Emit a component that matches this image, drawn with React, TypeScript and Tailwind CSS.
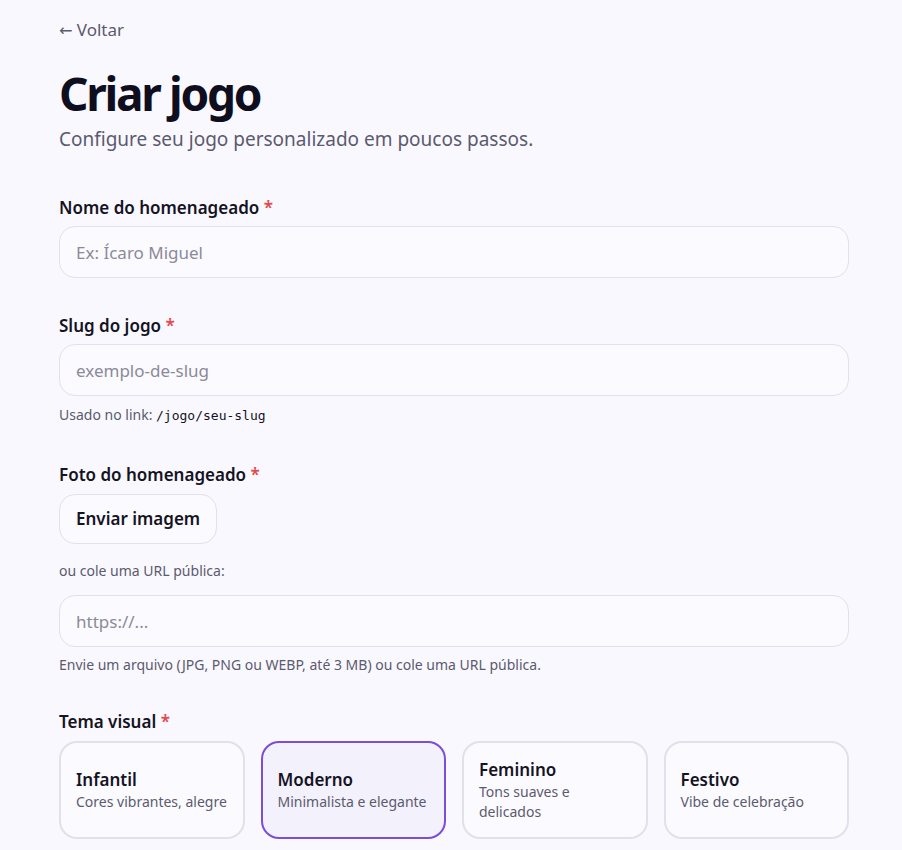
import { useState } from "react";

const themes = [
  { id: "infantil", title: "Infantil", desc: "Cores vibrantes, alegre" },
  { id: "moderno", title: "Moderno", desc: "Minimalista e elegante" },
  { id: "feminino", title: "Feminino", desc: "Tons suaves e delicados" },
  { id: "festivo", title: "Festivo", desc: "Vibe de celebração" },
];

function Label({ children }: { children: React.ReactNode }) {
  return (
    <label className="block text-[17px] font-semibold text-[#14131f] leading-6">
      {children} <span className="text-[#e5484d]">*</span>
    </label>
  );
}

function Input({ placeholder }: { placeholder: string }) {
  return (
    <input
      placeholder={placeholder}
      className="w-full h-[52px] rounded-2xl border border-[#e2e0ea] bg-[#fbfaff] px-4 text-[17px] text-[#14131f] placeholder:text-[#8b8a99] outline-none"
    />
  );
}

export default function App() {
  const [theme, setTheme] = useState("moderno");

  return (
    <div className="min-h-screen bg-[#f9f8fe] font-['Noto_Sans',sans-serif] text-[#14131f]">
      <div className="w-[790px] pl-[59px] box-content pt-[18px]">
        <a href="#" className="text-[17px] text-[#5b5a6e] leading-6">
          <span className="font-['DejaVu_Sans',sans-serif] text-[16px]">←</span> Voltar
        </a>

        <h1 className="mt-[22px] text-[46px] font-bold leading-[56px] tracking-[-0.05em] text-[#0f0e1f]">
          Criar jogo
        </h1>
        <p className="mt-[4px] text-[19px] text-[#5b5a6e] leading-7">
          Configure seu jogo personalizado em poucos passos.
        </p>

        <div className="mt-[43px] flex flex-col gap-[6px]">
          <Label>Nome do homenageado</Label>
          <Input placeholder="Ex: Ícaro Miguel" />
        </div>

        <div className="mt-[36px] flex flex-col gap-[6px]">
          <Label>Slug do jogo</Label>
          <Input placeholder="exemplo-de-slug" />
          <p className="mt-[3px] text-[14px] text-[#5b5a6e] leading-5">
            Usado no link:{" "}
            <code className="font-['DejaVu_Sans_Mono',monospace] text-[13px] text-[#14131f]">/jogo/seu-slug</code>
          </p>
        </div>

        <div className="mt-[37px] flex flex-col items-start gap-[7px]">
          <Label>Foto do homenageado</Label>
          <button className="h-[50px] rounded-2xl border border-[#e2e0ea] bg-[#fbfaff] px-4 text-[17px] font-semibold text-[#14131f]">
            Enviar imagem
          </button>
          <p className="mt-[10px] text-[14px] text-[#5b5a6e] leading-5">ou cole uma URL pública:</p>
          <div className="mt-[7px] w-full">
            <Input placeholder="https://..." />
          </div>
          <p className="mt-[1px] text-[14px] text-[#5b5a6e] leading-5">
            Envie um arquivo (JPG, PNG ou WEBP, até 3 MB) ou cole uma URL pública.
          </p>
        </div>

        <div className="mt-[35px] flex flex-col gap-[7px]">
          <Label>Tema visual</Label>
          <div className="grid grid-cols-4 gap-4">
            {themes.map((t) => {
              const active = t.id === theme;
              return (
                <button
                  key={t.id}
                  onClick={() => setTheme(t.id)}
                  className={
                    active
                      ? "h-[98px] rounded-[18px] border-2 border-[#7c4ddc] bg-[#f3f1fb] px-[15px] text-left flex flex-col justify-center"
                      : "h-[98px] rounded-[18px] border-2 border-[#e2e0ea] bg-[#fbfaff] px-[15px] text-left flex flex-col justify-center"
                  }
                >
                  <span className="text-[17px] font-semibold text-[#14131f] leading-6">{t.title}</span>
                  <span className="text-[14px] text-[#5b5a6e] leading-5">{t.desc}</span>
                </button>
              );
            })}
          </div>
        </div>
      </div>
    </div>
  );
}
